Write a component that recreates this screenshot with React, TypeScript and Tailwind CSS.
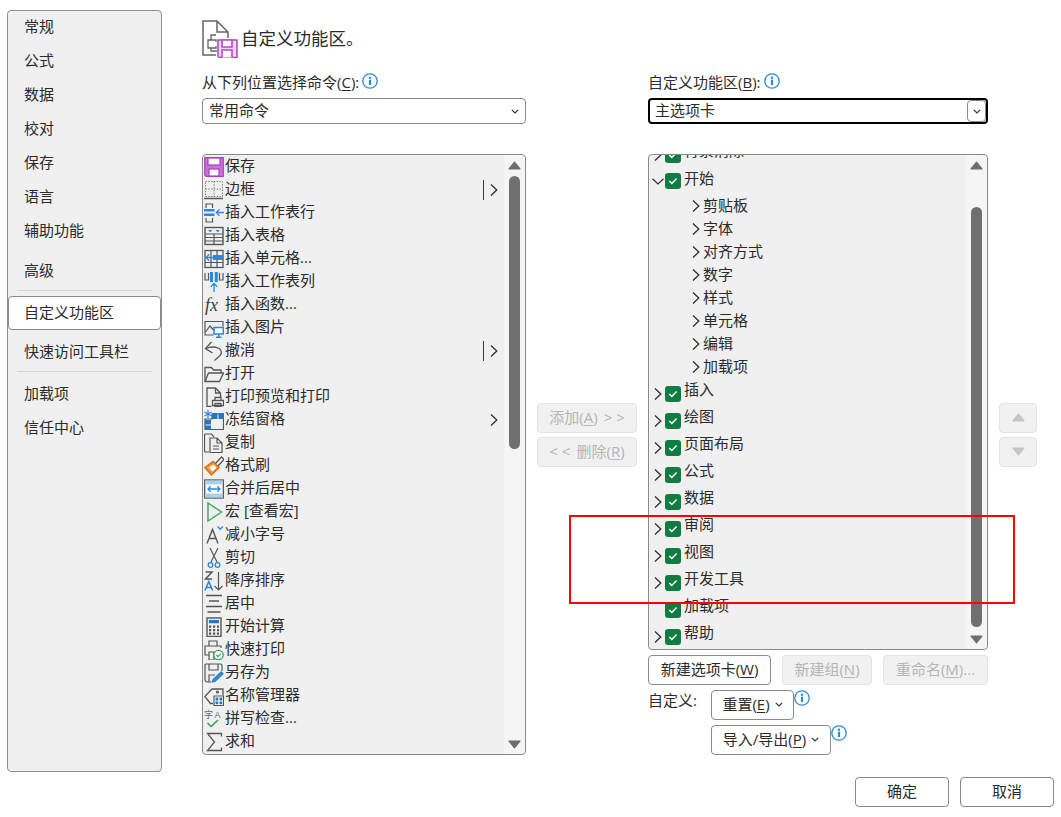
import { ReactNode } from "react"

const navTop = ["常规", "公式", "数据", "校对", "保存", "语言", "辅助功能"]

const BLUE = "#2b88d8"
const GRAY = "#555555"

const Chevron = ({ className = "" }: { className?: string }) => (
  <svg width="8" height="12" viewBox="0 0 8 12" className={className}>
    <path d="M1 .6 6.800 6 1 11.400" fill="none" stroke="#2f2f2f" strokeWidth="1.300" />
  </svg>
)

const SmallDown = () => (
  <svg width="8" height="5" viewBox="0 0 8 5">
    <path d="M.8.8 4 4l3.200-3.200" fill="none" stroke="#333" strokeWidth="1.200" />
  </svg>
)

const Info = ({ className = "" }: { className?: string }) => (
  <svg width="16" height="16" viewBox="0 0 16 16" className={className}>
    <circle cx="8" cy="8" r="7.200" fill="#fff" stroke={BLUE} strokeWidth="1.300" />
    <circle cx="8" cy="4.700" r="1.200" fill={BLUE} />
    <rect x="6.900" y="6.700" width="2.200" height="5.300" fill={BLUE} />
  </svg>
)

const Triangle = ({ down, color = "#6e6e6e" }: { down?: boolean; color?: string }) => (
  <svg width="13" height="9" viewBox="0 0 13 9" className={down ? "rotate-180" : ""}>
    <path d="M6.500 1.200 12 8H1Z" fill={color} stroke={color} strokeLinejoin="round" strokeWidth="1.200" />
  </svg>
)

const I = ({ children }: { children: ReactNode }) => (
  <svg width="20" height="20" viewBox="0 0 20 20" className="shrink-0" fill="none" strokeWidth="1.200">
    {children}
  </svg>
)

const icons: Record<string, ReactNode> = {
  save: (
    <I>
      <path d="M.7.7h18.600v18.600H3a2.300 2.300 0 0 1-2.300-2.300Z" fill="#cb72d8" stroke="#a742b8" />
      <rect x="4" y="1" width="12" height="7" fill="#fff" stroke="#a742b8" />
      <rect x="5" y="12" width="10" height="7" fill="#fff" stroke="#a742b8" />
    </I>
  ),
  border: (
    <I>
      <path d="M1.500 1.500h17v15h-17ZM10 1.500v15M1.500 9h17" stroke="#777" strokeWidth="1" strokeDasharray="1.400 1.400" />
      <path d="M0 18.500h19" stroke={GRAY} strokeWidth="1.500" />
    </I>
  ),
  insertRow: (
    <I>
      <path d="M2 5V1h6.500V5M2 15v4h6.500v-4" stroke={GRAY} />
      <path d="M0 6h10.500v2.500H0ZM0 10.500h10.500V13H0Z" fill={BLUE} />
      <path d="M20 9.500h-7.500M15.500 6.300l-3.200 3.200 3.200 3.200" stroke={BLUE} strokeWidth="1.300" />
    </I>
  ),
  insertTable: (
    <I>
      <rect x="1" y="1.500" width="18" height="17" stroke={GRAY} strokeWidth="1.400" />
      <path d="M1 8h18M1 11.500h18M1 15h18M10 8v10.500" stroke={GRAY} />
      <path d="M4 4h4.500L6.200 6.300ZM11.500 4H16l-2.200 2.300Z" fill={BLUE} />
    </I>
  ),
  insertCell: (
    <I>
      <rect x="1" y="1.500" width="18" height="17" stroke={GRAY} strokeWidth="1.300" />
      <path d="M7 1.500v17M13 1.500v17M1 13.500h18" stroke={GRAY} />
      <path d="M9 6h10.500v5H9Z" fill={BLUE} />
      <path d="M9 8.500H2M5.200 5.300l-3.200 3.200 3.200 3.200" stroke={BLUE} strokeWidth="1.300" />
    </I>
  ),
  insertCol: (
    <I>
      <path d="M1 1v7h3.500V1M15.500 1v7H19V1" stroke={GRAY} />
      <path d="M6 0h3v10H6ZM10.800 0h3v10h-3Z" fill={BLUE} />
      <path d="M10 20v-8.500M6.800 14.700 10 11.500l3.200 3.200" stroke={BLUE} strokeWidth="1.300" />
    </I>
  ),
  fx: (
    <I>
      <text x="1" y="16" fontFamily="Liberation Serif" fontStyle="italic" fontSize="18" fill="#3c3c3c">
        fx
      </text>
    </I>
  ),
  picture: (
    <I>
      <path d="M9.500 17H1V3.500h18v5" stroke={GRAY} />
      <path d="m1.500 14 4.500-6 4 4.500" stroke={GRAY} />
      <path d="M10 9.500h9.300v6.500H10Z" fill="#fff" stroke={BLUE} strokeWidth="1.500" />
      <path d="M12 19.300h5.500M14.700 16v3.300" stroke={BLUE} strokeWidth="1.500" />
    </I>
  ),
  undo: (
    <I>
      <path d="M1.500 7.500c4-1.500 9-2 12.500-.5 3.500 1.500 4.500 5 2 7.500L10.500 19.500" stroke={GRAY} strokeWidth="1.300" />
      <path d="M7.500 1 1.500 7.500 8.500 12" stroke={GRAY} strokeWidth="1.300" />
    </I>
  ),
  open: (
    <I>
      <path d="M1 17.500V3.500h6.500l2 2.500H17v3" stroke={GRAY} strokeWidth="1.300" />
      <path d="M1 17.500 4.500 9H19.500L15.500 17.500Z" stroke={GRAY} strokeWidth="1.300" />
    </I>
  ),
  preview: (
    <I>
      <path d="M7.500 19.500H3V1h8.500l5 5v4M11.500 1v5h5" stroke={GRAY} strokeWidth="1.300" />
      <path d="M8.500 13.500h11v5h-11ZM11 13.500V10.500h6v3M11 16.500h6v3.500h-6Z" fill="#fff" stroke={GRAY} strokeWidth="1.300" />
    </I>
  ),
  freeze: (
    <I>
      <path d="M8 4h11.500v15.500H1V9h7Z" stroke={GRAY} />
      <path d="M8 3h5.500v6H8ZM14.500 3H20v6h-5.500ZM1 10h6v4.500H1ZM1 15.500h6V20H1Z" fill="#2476bd" />
      <path d="M4 0v8M.5 2l7 4M7.500 2l-7 4" stroke={BLUE} strokeWidth="1.200" />
    </I>
  ),
  copy: (
    <I>
      <path d="M5 19H1.500a1 1 0 0 1-1-1V2a1 1 0 0 1 1-1h6L10 4" stroke={GRAY} />
      <path d="M6 5h7l5 5v9.500H6ZM13 5v5h5M9 13h6M9 16h6" stroke={GRAY} />
    </I>
  ),
  brush: (
    <I>
      <path d="M.8 11.500 9 5.500l6 6-7.500 7.500Z" fill="#f0943f" stroke="#dc6f17" strokeWidth="1.400" />
      <path d="m5 11.500 4.500-3 3 3-4 4Z" fill="#fff" />
      <path d="m11.500 7.500 6-6.500 2.500 2.500-6 6.500" stroke={GRAY} strokeWidth="1.300" />
    </I>
  ),
  merge: (
    <I>
      <rect x=".7" y="1" width="18.600" height="18" fill="#fff" stroke={GRAY} strokeWidth="1.300" />
      <path d="M1 1.500h18v4H1ZM1 14.500h18v4H1Z" fill="#a8d0ef" />
      <path d="M4 10h12M6.700 7.300 4 10l2.700 2.700M13.300 7.300 16 10l-2.700 2.700" stroke={BLUE} strokeWidth="1.300" />
    </I>
  ),
  macro: (
    <I>
      <path d="M4 1v18l13.500-9Z" stroke="#45ab65" strokeWidth="1.500" />
    </I>
  ),
  shrink: (
    <I>
      <path d="m3 18.500 5.500-14 5.500 14M5 13.500h7" stroke={GRAY} strokeWidth="1.400" />
      <path d="m13.500 1.500 2.700 2.700 2.700-2.700" stroke={BLUE} strokeWidth="1.400" />
    </I>
  ),
  cut: (
    <I>
      <path d="M6 0l7 14M14 0 7 14" stroke={GRAY} strokeWidth="1.200" />
      <circle cx="6.500" cy="17" r="2.300" stroke={BLUE} strokeWidth="1.300" />
      <circle cx="13.500" cy="17" r="2.300" stroke={BLUE} strokeWidth="1.300" />
    </I>
  ),
  sort: (
    <I>
      <path d="M1.500 1h6.500L1.500 8h6.500" stroke={GRAY} strokeWidth="1.500" />
      <path d="m1 19.500 3.800-9 3.800 9M2.200 16.500h5.200" stroke={BLUE} strokeWidth="1.600" />
      <path d="M14.500 1v18M10.500 15l4 4 4-4" stroke={GRAY} strokeWidth="1.200" />
    </I>
  ),
  center: (
    <I>
      <path d="M2 1.500h16M5 7h10M2 12.500h16M3.500 18h13" stroke={GRAY} strokeWidth="1.300" />
    </I>
  ),
  calc: (
    <I>
      <rect x="3" y="1" width="14" height="18.500" stroke={GRAY} strokeWidth="1.400" />
      <path d="M5 3h10v3.200H5Z" fill="#2476bd" />
      <path d="M5 8.500h2.200v2.200H5ZM9 8.500h2.200v2.200H9ZM13 8.500h2v2.200h-2ZM5 12h2.200v2.200H5ZM9 12h2.200v2.200H9ZM13 12h2v2.200h-2ZM5 15.500h2.200v2.200H5ZM9 15.500h2.200v2.200H9ZM13 15.500h2v2.200h-2Z" fill={GRAY} />
    </I>
  ),
  quickPrint: (
    <I>
      <path d="M5 6V1h8v5M5 15H1V6h16v2M5 12h5v8H5Z" stroke={GRAY} />
      <circle cx="14.500" cy="15" r="4.700" fill="#fff" stroke="#37a054" strokeWidth="1.300" />
      <path d="m12.300 15 1.700 1.700 2.800-3" stroke="#37a054" />
    </I>
  ),
  saveAs: (
    <I>
      <path d="M7 19H3.500A2.500 2.500 0 0 1 1 16.500V2a1 1 0 0 1 1-1h14.500a1.500 1.500 0 0 1 1.500 1.500V8" stroke={GRAY} />
      <path d="M5 1v6h9V1M5 19v-7h6" stroke={GRAY} />
      <path d="m7.500 20 1.200-4 8.500-8 2.800 2.800-8.500 8Z" fill={BLUE} />
    </I>
  ),
  names: (
    <I>
      <path d="M9 17.500H6.500L.8 10.500 8 3h11v6.500" stroke={GRAY} strokeWidth="1.300" />
      <circle cx="13.500" cy="6" r="1" stroke={GRAY} />
      <path d="M10 10h9.500v9.500H10Z" fill="#fff" stroke={GRAY} />
      <path d="M11.500 11.500H14.300v3H11.500ZM15.500 11.500h2.700v3h-2.700ZM11.500 15.500H14.300v2.700H11.500ZM15.500 15.500h2.700v2.700h-2.700Z" fill="#2476bd" />
    </I>
  ),
  spell: (
    <I>
      <text x="0" y="8.500" fontSize="9" fill="#666" fontFamily="Noto Sans CJK SC">
        字
      </text>
      <text x="10.500" y="8.500" fontSize="9" fill="#666" fontFamily="Liberation Sans">
        A
      </text>
      <path d="m3.500 14 3.500 3.500 7-6.500" stroke="#37a054" strokeWidth="1.600" />
    </I>
  ),
  sum: (
    <I>
      <path d="M17.500 4.500V1.500H3.500L10.500 10l-7 8.500h14V15.500" stroke={GRAY} strokeWidth="1.300" />
    </I>
  ),
}

const commands: { icon: string; label: string; split?: boolean; arrow?: boolean }[] = [
  { icon: "save", label: "保存" },
  { icon: "border", label: "边框", split: true, arrow: true },
  { icon: "insertRow", label: "插入工作表行" },
  { icon: "insertTable", label: "插入表格" },
  { icon: "insertCell", label: "插入单元格..." },
  { icon: "insertCol", label: "插入工作表列" },
  { icon: "fx", label: "插入函数..." },
  { icon: "picture", label: "插入图片" },
  { icon: "undo", label: "撤消", split: true, arrow: true },
  { icon: "open", label: "打开" },
  { icon: "preview", label: "打印预览和打印" },
  { icon: "freeze", label: "冻结窗格", arrow: true },
  { icon: "copy", label: "复制" },
  { icon: "brush", label: "格式刷" },
  { icon: "merge", label: "合并后居中" },
  { icon: "macro", label: "宏 [查看宏]" },
  { icon: "shrink", label: "减小字号" },
  { icon: "cut", label: "剪切" },
  { icon: "sort", label: "降序排序" },
  { icon: "center", label: "居中" },
  { icon: "calc", label: "开始计算" },
  { icon: "quickPrint", label: "快速打印" },
  { icon: "saveAs", label: "另存为" },
  { icon: "names", label: "名称管理器" },
  { icon: "spell", label: "拼写检查..." },
  { icon: "sum", label: "求和" },
]

const subTabs = ["剪贴板", "字体", "对齐方式", "数字", "样式", "单元格", "编辑", "加载项"]
const afterTabs = ["插入", "绘图", "页面布局", "公式", "数据", "审阅", "视图", "开发工具", "加载项", "帮助"]

const Check = () => (
  <span className="flex h-4 w-4 shrink-0 items-center justify-center rounded-[3px] bg-[#107c41]">
    <svg width="10" height="8" viewBox="0 0 10 8">
      <path d="m1.300 4 2.500 2.500 4.800-5" fill="none" stroke="#fff" strokeWidth="1.500" />
    </svg>
  </span>
)

const TabRow = ({ label, open, noArrow }: { label: string; open?: boolean; noArrow?: boolean }) => (
  <div className={`flex items-center ${open ? "h-[26px]" : "h-[27px]"}`}>
    <span className="flex w-[16px] justify-center pl-[1px]">
      {noArrow ? null : open ? (
        <svg width="12" height="7" viewBox="0 0 12 7">
          <path d="M.5.8 6 6 11.500.8" fill="none" stroke="#2f2f2f" strokeWidth="1.200" />
        </svg>
      ) : (
        <Chevron />
      )}
    </span>
    <Check />
    <span className={`ml-[3px] leading-5 ${open ? "mb-[7px]" : "mb-[9px]"}`}>{label}</span>
  </div>
)

const Key = ({ children }: { children: ReactNode }) => <span className="underline underline-offset-2">{children}</span>

const Btn = ({ children, disabled, className = "" }: { children: ReactNode; disabled?: boolean; className?: string }) => (
  <div
    className={`flex items-center justify-center rounded-[4px] border pb-[2px] ${
      disabled ? "border-[#e3e3e3] bg-[#f1f1f1] text-[#b5b5b5]" : "border-[#8a8a8a] bg-white"
    } ${className}`}
  >
    {children}
  </div>
)

const ScrollTrack = ({ thumbTop, thumbH }: { thumbTop: string; thumbH: string }) => (
  <div className="flex w-[21px] shrink-0 flex-col items-center rounded-r-[4px] bg-[#f5f5f5]">
    <div className="flex h-[21px] shrink-0 items-center justify-center">
      <Triangle />
    </div>
    <div className={`w-[11px] shrink-0 rounded-full bg-[#707070] ${thumbTop} ${thumbH}`} />
    <div className="mb-[5px] mt-auto">
      <Triangle down />
    </div>
  </div>
)

const App = () => {
  return (
    <div className="relative flex h-[817px] w-[1061px] overflow-hidden bg-white font-['Open_Sans','Noto_Sans_CJK_SC',sans-serif] text-[15px] text-[#2b2b2b]">
      <aside className="ml-[7px] mt-[10px] h-[762px] w-[155px] shrink-0 rounded-[4px] border border-[#8f8f8f] bg-[#f0f0f0]">
        {navTop.map((n) => (
          <div key={n} className="flex h-[34px] items-center pb-[4px] pl-[16px]">
            {n}
          </div>
        ))}
        <div className="mt-[5px] flex h-[34px] items-center pb-[2px] pl-[16px]">高级</div>
        <div className="mx-[9px] mt-[2px] h-px bg-[#d4d4d4]" />
        <div className="mt-[5px] flex h-[34px] items-center rounded-[4px] border border-[#8a8a8a] bg-white pb-[2px] pl-[15px]">自定义功能区</div>
        <div className="mt-[4px] flex h-[34px] items-center pl-[16px]">快速访问工具栏</div>
        <div className="mx-[9px] mt-[3px] h-px bg-[#d4d4d4]" />
        <div className="mt-[4px] flex h-[34px] items-center pl-[16px]">加载项</div>
        <div className="flex h-[34px] items-center pl-[16px]">信任中心</div>
      </aside>

      <main className="ml-[40px] flex flex-col">
        <header className="mt-[20px] flex h-[38px] items-center">
          <svg width="36" height="38" viewBox="0 0 36 38" fill="none">
            <path d="M14 35H1V1h14l11 11v6M15 1v11h11" stroke="#666" strokeWidth="1.500" />
            <path d="M14 15h-5v5H6v8h3v3h6M9 20h5v2M9 28h5v-2" stroke="#666" strokeWidth="1.300" />
            <path d="M16 20h19v17.500H18a2 2 0 0 1-2-2Z" fill="#f0d6f3" stroke="#b14ec2" strokeWidth="1.600" />
            <path d="M20 20h10v7H20ZM20 37.500V30h10v7.500" fill="#fff" stroke="#b14ec2" strokeWidth="1.600" />
          </svg>
          <h1 className="ml-[3px] pb-[2px] text-[17.500px] font-normal">自定义功能区。</h1>
        </header>

        <div className="mt-[14px] flex">
          <section className="w-[324px]">
            <div className="flex h-[26px] items-center pb-[6px]">
              从下列位置选择命令(<Key>C</Key>):
              <Info className="mb-[2px] ml-[3px]" />
            </div>
            <div className="flex h-[26px] items-center justify-between rounded-[4px] border border-[#8a8a8a] bg-white pl-[6px] pr-[6px]">
              <span className="mb-[2px]">常用命令</span>
              <SmallDown />
            </div>
            <div className="mt-[30px] flex h-[601px] overflow-hidden rounded-[4px] border border-[#8a8a8a] bg-[#f0f0f0]">
              <div className="min-w-0 flex-1">
                {commands.map((c) => (
                  <div key={c.label} className="flex h-[23px] items-center pl-[1px]">
                    {icons[c.icon]}
                    <span className="mb-[2px] ml-[1px]">{c.label}</span>
                    {c.arrow && (
                      <span className="ml-auto mr-[6px] flex items-center gap-[6px]">
                        {c.split && <span className="h-[20px] w-px bg-[#3c3c3c]" />}
                        <Chevron />
                      </span>
                    )}
                  </div>
                ))}
              </div>
              <ScrollTrack thumbTop="" thumbH="h-[273px]" />
            </div>
          </section>

          <section className="flex w-[122px] flex-col items-center pt-[331px]">
            <Btn disabled className="h-[30px] w-[100px] gap-[6px]">
              <span>
                添加(<Key>A</Key>)
              </span>
              <span>&gt; &gt;</span>
            </Btn>
            <Btn disabled className="mt-[4px] h-[30px] w-[100px] gap-[6px]">
              <span>&lt; &lt;</span>
              <span>
                删除(<Key>R</Key>)
              </span>
            </Btn>
          </section>

          <section className="w-[340px]">
            <div className="flex h-[26px] items-center pb-[6px]">
              自定义功能区(<Key>B</Key>):
              <Info className="mb-[2px] ml-[3px]" />
            </div>
            <div className="flex h-[26px] items-center justify-between rounded-[4px] border-2 border-black bg-white pl-[5px]">
              <span className="mb-[2px]">主选项卡</span>
              <span className="flex h-full w-[19px] items-center justify-center rounded-[4px] border border-[#8a8a8a]">
                <SmallDown />
              </span>
            </div>
            <div className="mt-[30px] flex h-[496px] overflow-hidden rounded-[4px] border border-[#8a8a8a] bg-[#f0f0f0]">
              <div className="min-w-0 flex-1">
                <div className="-mt-[14px]">
                  <TabRow label="背景消除" />
                  <TabRow label="开始" open />
                  {subTabs.map((s) => (
                    <div key={s} className="flex h-[23px] items-center pl-[43px]">
                      <Chevron />
                      <span className="ml-[3px]">{s}</span>
                    </div>
                  ))}
                  <div className="h-[2px]" />
                  {afterTabs.map((t) => (
                    <TabRow key={t} label={t} noArrow={t === "加载项"} />
                  ))}
                </div>
              </div>
              <ScrollTrack thumbTop="mt-[31px]" thumbH="h-[420px]" />
            </div>
            <div className="mt-[5px] flex gap-[11px]">
              <Btn className="h-[30px] w-[123px]">
                <span>
                  新建选项卡(<Key>W</Key>)
                </span>
              </Btn>
              <Btn disabled className="h-[30px] w-[90px]">
                <span>
                  新建组(<Key>N</Key>)
                </span>
              </Btn>
              <Btn disabled className="h-[30px] w-[105px]">
                <span>
                  重命名(<Key>M</Key>)...
                </span>
              </Btn>
            </div>
            <div className="mt-[5px] flex">
              <span className="w-[63px] leading-5">自定义:</span>
              <div className="flex flex-col gap-[5px]">
                <div className="flex items-start">
                  <Btn className="h-[30px] w-[83px] gap-[5px]">
                    <span>
                      重置(<Key>E</Key>)
                    </span>
                    <SmallDown />
                  </Btn>
                  <Info />
                </div>
                <div className="flex items-start">
                  <Btn className="h-[30px] w-[120px] gap-[5px]">
                    <span>
                      导入/导出(<Key>P</Key>)
                    </span>
                    <SmallDown />
                  </Btn>
                  <Info />
                </div>
              </div>
            </div>
          </section>

          <section className="ml-[11px] flex flex-col pt-[331px]">
            <Btn disabled className="h-[30px] w-[38px]">
              <Triangle color="#c4c4c4" />
            </Btn>
            <Btn disabled className="mt-[4px] h-[30px] w-[38px]">
              <Triangle down color="#c4c4c4" />
            </Btn>
          </section>
        </div>

        <footer className="mt-[22px] flex w-[852px] justify-end gap-[11px]">
          <Btn className="h-[30px] w-[94px]">确定</Btn>
          <Btn className="h-[30px] w-[94px]">取消</Btn>
        </footer>
      </main>

      <div className="absolute left-[569px] top-[515px] h-[89px] w-[446px] border-2 border-[#ff0000]" />
    </div>
  )
}

export default App
